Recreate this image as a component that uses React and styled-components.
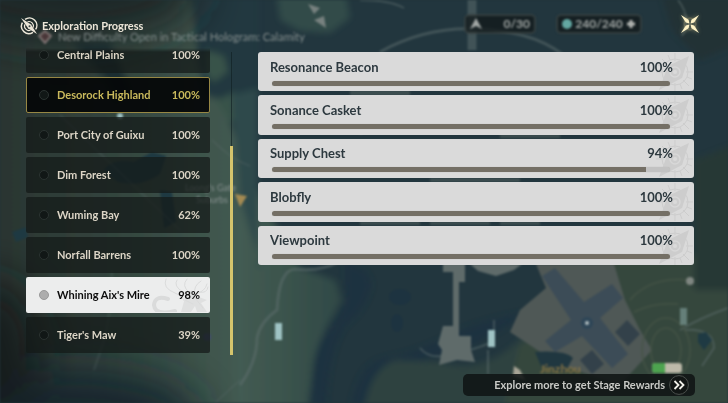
import React, { useLayoutEffect, useRef, useState } from 'react'
import styled, { createGlobalStyle } from 'styled-components'

const regions = [
    { name: "Central Plains", value: 100 },
    { name: "Desorock Highland", value: 100, current: true },
    { name: "Port City of Guixu", value: 100 },
    { name: "Dim Forest", value: 100 },
    { name: "Wuming Bay", value: 62 },
    { name: "Norfall Barrens", value: 100 },
    { name: "Whining Aix's Mire", value: 98 },
    { name: "Tiger's Maw", value: 39 },
];

const goals = [
    { name: "Resonance Beacon", value: 100 },
    { name: "Sonance Casket", value: 100 },
    { name: "Supply Chest", value: 94 },
    { name: "Blobfly", value: 100 },
    { name: "Viewpoint", value: 100 },
];

const GlobalStyle = createGlobalStyle`
* {
box-sizing: border-box;
}
body {
margin: 0;
background: #22343a;
font-family: Lato, "Noto Sans", sans-serif;
}
button {
font: inherit;
border: none;
cursor: pointer;
}
`;

const Page = styled.div`
position: relative;
height: 100vh;
min-height: 400px;
display: flex;
flex-direction: column;
overflow: hidden;
isolation: isolate;
`;

const Backdrop = styled.div`
position: absolute;
inset: 0;
z-index: -1;
`;
const MapSvg = styled.svg`
display: block;
width: 100%;
height: 100%;
filter: blur(1px);
`;
const Hud = styled.div`
position: absolute;
top: 14px;
left: 38px;
right: 86px;
display: flex;
align-items: flex-start;
gap: 20px;
color: #a3a8a6;
font-size: 12px;
font-weight: 700;
line-height: 20px;
filter: blur(1px);
`;
const Notice = styled.div`
flex: 1;
display: flex;
align-items: center;
gap: 6px;
padding-top: 16px;
font-size: 11px;
font-weight: 400;
line-height: 14px;
color: #858e8d;
white-space: nowrap;
`;
const Counter = styled.div`
display: flex;
align-items: center;
justify-content: space-between;
width: ${(props) => props.$wide ? "86px" : "72px"};
height: 20px;
padding: 0 4px;
border: 2px solid rgba(110, 120, 118, 0.35);
border-radius: 5px;
background: rgba(17, 24, 26, 0.75);
`;

const Header = styled.header`
display: flex;
align-items: flex-start;
justify-content: space-between;
height: 48px;
padding: 14px 28px 0 20px;
`;
const Title = styled.h1`
display: flex;
align-items: center;
gap: 4px;
margin: 3px 0 0;
color: #ece6d8;
font-size: 11px;
font-weight: 700;
line-height: 14px;
`;
const CloseButton = styled.button`
display: flex;
padding: 0;
background: none;
filter: drop-shadow(0 0 2px rgba(255, 236, 170, 0.5));
`;

const Main = styled.main`
flex: 1;
min-height: 0;
display: grid;
grid-template-columns: minmax(0, 184fr) 48px minmax(0, 436fr);
grid-template-rows: minmax(0, 1fr);
padding: 0 34px 0 26px;
`;

const RegionList = styled.nav`
display: flex;
flex-direction: column;
gap: 4px;
padding-bottom: 2px;
overflow-y: auto;
scrollbar-width: none;
mask-image: linear-gradient(transparent, #000 4px);
`;
const Region = styled.button`
position: relative;
flex: none;
display: flex;
align-items: center;
gap: 8px;
height: 36px;
padding: 0 9px 0 12px;
border: 1px solid ${(props) => props.$current ? "#978744" : "transparent"};
border-radius: 2px;
background: ${(props) => props.$active ? "#eceded" : props.$current ? "rgba(4, 7, 8, 0.92)" : "rgba(20, 25, 24, 0.72)"};
color: ${(props) => props.$active ? "#0c0c0c" : props.$current ? "#c9b95c" : "#dcd5c6"};
font-size: 11px;
font-weight: 700;
line-height: 16px;
text-align: left;
overflow: hidden;
`;
const Dot = styled.span`
width: 10px;
height: 10px;
border: 1px solid ${(props) => props.$active ? "#999" : "#2b3331"};
border-radius: 50%;
background: ${(props) => props.$active ? "#adadad" : "#111716"};
`;
const RegionName = styled.span`
flex: 1;
white-space: nowrap;
z-index: 1;
`;
const RegionValue = styled.span`
z-index: 1;
`;
const Beast = styled.svg`
position: absolute;
right: 0;
top: 0;
width: 58px;
height: 36px;
`;

const ScrollTrack = styled.div`
display: flex;
flex-direction: column;
justify-content: flex-end;
width: 3px;
margin: 4px 0 0 20px;
background: linear-gradient(90deg, transparent 1px, rgba(15, 30, 32, 0.6) 1px, rgba(15, 30, 32, 0.6) 2px, transparent 2px);
`;
const ScrollThumb = styled.div`
height: 69%;
background: #d5c46c;
`;

const GoalList = styled.ul`
display: grid;
grid-auto-rows: 1fr;
align-self: start;
gap: 4px;
min-height: 213px;
margin: 4px 0 0;
padding: 0;
list-style: none;
`;
const Goal = styled.li`
position: relative;
display: flex;
flex-direction: column;
justify-content: center;
gap: 4px;
padding: 0 21px 1px 12px;
border-radius: 3px;
background: #dadada;
color: #2d393f;
font-size: 13px;
font-weight: 700;
line-height: 20px;
overflow: hidden;
`;
const GoalHead = styled.div`
display: flex;
justify-content: space-between;
z-index: 1;
`;
const Bar = styled.div`
height: 5px;
margin: 0 3px 0 2px;
border-radius: 3px;
background: #c2c2c2;
box-shadow: 0 0 1px #b0b0ac;
overflow: hidden;
z-index: 1;
`;
const BarFill = styled.div`
height: 100%;
background: #746f65;
`;
const Compass = styled.svg`
position: absolute;
right: 0;
top: 0;
width: 40px;
height: 40px;
`;

const Footer = styled.footer`
display: flex;
justify-content: flex-end;
align-items: flex-end;
height: 48px;
padding: 0 33px 7px;
`;
const RewardsButton = styled.button`
display: flex;
align-items: center;
justify-content: flex-end;
gap: 4px;
width: 232px;
height: 22px;
padding: 0 6px;
border-radius: 5px;
background: rgba(16, 21, 20, 0.88);
color: #c9cac6;
font-size: 11px;
font-weight: 700;
line-height: 20px;
white-space: nowrap;
`;

const WorldMap = () => (
    <MapSvg viewBox="0 0 728 403" preserveAspectRatio="xMidYMid slice">
        <defs>
            <linearGradient id="land" x1="0" y1="0" x2="1" y2="0">
                <stop offset="0" stopColor="#29322f" />
                <stop offset="0.4" stopColor="#34463f" />
                <stop offset="0.72" stopColor="#435b52" />
                <stop offset="1" stopColor="#304946" />
            </linearGradient>
            <filter id="soft" x="-10%" y="-10%" width="120%" height="120%">
                <feGaussianBlur stdDeviation="3" />
            </filter>
            <filter id="haze" filterUnits="userSpaceOnUse" x="-150" y="-150" width="700" height="700">
                <feGaussianBlur stdDeviation="22" />
            </filter>
        </defs>
        <rect width="728" height="403" fill="#22363e" />
        {/* land and coasts */}
        <g filter="url(#soft)">
            <path d="M-20 -20H190L206 30L220 70L232 110L246 150L262 200L300 268L335 280L342 300L325 330L314 360L306 423H-20Z" fill="url(#land)" />
            <path d="M190 -10H258V150L236 140L222 100L206 96L198 60Z" fill="#22383f" />
            <path d="M206 50l18 6 4 16-14 10-8-8zM216 100l20-8 12 20-18 10z" fill="#385349" />
            <path d="M72 42l36 40 8 20 16-10-22-50z" fill="#1d2d30" />
            <path d="M345 262q28 6 26 26q-6 22-24 36q-20 24-22 99h-14q-2-70 14-90q24-26 20-50z" fill="#1d3340" />
            <path d="M600 268L540 310Q500 315 460 330Q420 352 384 358Q352 366 350 423H364Q370 372 402 366Q470 350 500 330Z" fill="#1d3340" />
            <path d="M362 423Q368 368 396 360L440 362Q480 376 520 340L560 320V423Z" fill="#2e4340" />
            <path d="M520 345L560 320L600 255H748V423H500Z" fill="#34463e" />
            <path d="M276 -10H345L350 18L330 33L300 31L280 20Z" fill="#324b49" />
            <path d="M232 95L258 88V268H262L240 200Z" fill="#2f4a4b" />
            <path d="M660 -10H748V40L700 60L672 30Z" fill="#243336" />
            <path d="M694 160L748 140V290H694Z" fill="#273936" />
        </g>
        <path d="M104 170q8-12 30-8l18-10 14 4-6 18q-20 14-42 8zM12 232l14-5 2 10-12 5zM160 190l12 2 4 30-12 6z" fill="#1e3942" />
        <path d="M308 4l12 4-6 6zM314 20l10-4 2 12z" fill="#77817f" />
        {/* vignette on the left side */}
        <g filter="url(#haze)">
            <ellipse cx="70" cy="-10" rx="130" ry="50" fill="#1f2728" />
            <ellipse cx="70" cy="420" rx="130" ry="50" fill="#17252d" />
            <ellipse cx="-10" cy="350" rx="50" ry="70" fill="#171c1e" />
        </g>
        <ellipse cx="400" cy="297" rx="11" ry="8" fill="#1d3340" />
        <ellipse cx="397" cy="323" rx="6" ry="9" fill="#1d3340" />
        {/* roads */}
        <g fill="none" stroke="#617070" strokeWidth="2" opacity="0.5">
            <path d="M380 52Q425 27 475 29Q530 30 562 54" strokeWidth="3" />
            <path d="M360 0Q390 0 404 8" />
            <path d="M472 0V50" strokeWidth="9" />
            <path d="M240 385Q257 362 257 338Q260 322 277 310Q279 270 295 269Q320 272 338 262" strokeWidth="3" />
            <path d="M420 348q8 10 22 8M470 350q20-6 24-10v-20M488 350v24" />
            <path d="M112 270q-2 50-8 70l-10 30M240 380l-24 22" opacity="0.5" />
            <path d="M680 330q20-12 48-22M684 330q30-2 30 18l-12 18" />
            <path d="M678 0q14 18 4 36M360 134q12-12 40-8M340 264q8-10 18-2" />
            <path d="M60 115L180 230M212 140Q232 160 250 166" opacity="0.5" />
        </g>
        <path d="M350 90h60v6h-60zM500 134h60v4h-60zM430 178h90v4h-90zM360 221h60v4h-60zM430 221h60v4h-60zM500 221h40v4h-40z" fill="#56645f" opacity="0.5" />
        {/* tower */}
        <path d="M443 262h22v20h-6v54h12v14l4 12-18-2-18 5 3-15-4-6 5-18h10v-54h-10z" fill="#5f6b6a" />
        <path d="M470 264h52l-8 6-18 6-18-5z" fill="#5f6b6a" />
        {/* city */}
        <path d="M536 264H614L625 300L640 330L652 350L620 385L560 365L510 332L520 310L546 288Z" fill="#4f5856" />
        <path d="M535 352q30-2 38 6l-8 14-24-6z" fill="#203740" />
        <path d="M542 276L555 268L584 302L612 284L623 298L600 318L628 354L612 368L582 336L555 352L545 341L571 320Z" fill="#3c4c57" />
        <path d="M615 332l12-12 13 14-12 12zM580 360l12-10 12 14-12 10z" fill="#33414a" />
        <circle cx="587" cy="323" r="6" fill="#2e4657" />
        <circle cx="587" cy="323" r="2" fill="#b2bfc2" />
        <g fill="none" stroke="#465447" strokeWidth="2" opacity="0.7">
            <ellipse cx="666" cy="350" rx="24" ry="32" />
            <ellipse cx="666" cy="350" rx="15" ry="22" />
            <path d="M630 300q20-24 60-20M634 312q20-10 44-8" />
        </g>
        <path d="M698 334l8-2 6 8-8 10-6-8z" fill="#1f3a43" />
        {/* markers */}
        <g fill="#9fc3c4">
            <rect x="275" y="323" width="7" height="17" />
            <rect x="488" y="330" width="7" height="17" />
            <rect x="680" y="308" width="7" height="17" opacity="0.45" />
            <circle cx="120" cy="116" r="3" />
            <circle cx="690" cy="281" r="4" fill="#7f8681" />
            <circle cx="207" cy="337" r="4" fill="#414c6c" />
        </g>
        <path d="M235 194l12 2-7 11z" fill="#a38a52" />
        <path d="M514 366l6 4 5 10-12-4z" fill="#a8a596" />
        <rect x="652" y="363" width="30" height="10" rx="3" fill="#bdb9a9" />
        <path d="M655 363h10v10h-10q-3 0-3-3v-4q0-3 3-3z" fill="#4da34f" />
        <g fontSize="9" fill="#87918f" textAnchor="end">
            <text x="236" y="191">Loong's Gate</text>
            <text x="228" y="203">Suburbs</text>
        </g>
        <text x="540" y="373" fontSize="12" fontWeight="700" fill="#897545">Jinzhou</text>
    </MapSvg>
)

const TitleIcon = () => (
    <svg width="18" height="18" viewBox="0 0 18 18" fill="none" stroke="#ece6d8" aria-hidden="true">
        <path d="M5 2.4A7.4 7.4 0 0 1 15.6 12.4M13 15.3A7.4 7.4 0 0 1 2.4 5.6" strokeWidth="1.5" />
        <path d="M7.5 4.8A4.5 4.5 0 0 1 13.2 10.6M10.6 13.2A4.5 4.5 0 0 1 4.8 7.4" strokeWidth="1.2" />
        <path d="M1 1L8.2 11.4L17 17L11 7.4Z" fill="#ece6d8" stroke="none" />
        <circle cx="9.5" cy="9.3" r="1" fill="#3b4442" stroke="none" />
    </svg>
)

const CloseIcon = () => (
    <svg width="20" height="20" viewBox="0 0 20 20" fill="#fff3c6" aria-hidden="true">
        <circle cx="10" cy="10" r="6" fill="none" stroke="#a99f72" strokeWidth="0.7" opacity="0.6" />
        <path d="M1 1L8.6 5.8L9.4 9.4L5.8 8.6Z" />
        <path d="M19 1L11.4 5.8L10.6 9.4L14.2 8.6Z" />
        <path d="M1 19L8.6 14.2L9.4 10.6L5.8 11.4Z" />
        <path d="M19 19L11.4 14.2L10.6 10.6L14.2 11.4Z" />
    </svg>
)

const CompassMark = () => (
    <Compass viewBox="0 0 40 40" fill="none" stroke="#cdcdcd" aria-hidden="true">
        <circle cx="21" cy="20" r="13" />
        <path d="M21 1v8M21 31v8M2 20h8M32 20h7M8 7l5 5M29 28l6 6M14 3l2 5M4 13l5 2M33 25l5 2M26 32l2 5" />
        <path d="M35 4L28 26L5 38L14 14Z" fill="#cdcdcd" stroke="none" />
        <circle cx="21" cy="20" r="5" stroke="#d8d8d8" strokeWidth="1.5" />
        <circle cx="21" cy="20" r="2" fill="#dadada" stroke="none" />
    </Compass>
)

const BeastMark = () => (
    <Beast viewBox="0 0 58 36" fill="none" stroke="#dadbdb" strokeLinecap="round" aria-hidden="true">
        <path d="M24 33Q4 38 3 27Q4 17 17 21" strokeWidth="4" />
        <path d="M15 1Q11 10 24 15Q34 19 35 28M26 2Q22 8 32 14Q40 20 38 34M36 1Q30 8 38 14M50 3Q42 8 44 16Q54 14 56 6" />
        <path d="M30 34L34 20L40 12L48 19L56 22L50 25L56 34H46L44 28L40 34Z" fill="#dfe0e0" stroke="none" />
        <path d="M34 22l8 4M44 20l8 10M48 14q8 2 9-5" />
    </Beast>
)

const App = () => {
    const [selected, setSelected] = useState("Whining Aix's Mire");
    const listRef = useRef(null);

    useLayoutEffect(() => {
      listRef.current.scrollTop = listRef.current.scrollHeight;
    }, []);

  return (
    <Page>
        <GlobalStyle />
        <Backdrop aria-hidden="true">
            <WorldMap />
            <Hud>
                <Notice>
                    <svg width="14" height="14" viewBox="0 0 14 14">
                        <path d="M7 1L13 6L7 13L1 6Z" fill="#493638" stroke="#7d7372" strokeWidth="2" />
                    </svg>
                    New Difficulty Open in Tactical Hologram: Calamity
                </Notice>
                <Counter>
                    <svg width="12" height="12" viewBox="0 0 12 12">
                        <path d="M6 0L12 11L6 8L0 11Z" fill="#a3a8a6" />
                    </svg>
                    0/30
                </Counter>
                <Counter $wide>
                    <svg width="10" height="10" viewBox="0 0 10 10">
                        <circle cx="5" cy="5" r="5" fill="#63a8a2" />
                    </svg>
                    240/240
                    <svg width="10" height="10" viewBox="0 0 10 10">
                        <path d="M5 1V9M1 5H9" stroke="#b5b8b4" strokeWidth="3" />
                    </svg>
                </Counter>
            </Hud>
        </Backdrop>
        <Header>
            <Title>
                <TitleIcon />
                Exploration Progress
            </Title>
            <CloseButton aria-label="Close">
                <CloseIcon />
            </CloseButton>
        </Header>
        <Main>
            <RegionList ref={listRef}>
                {regions.map((item) => (
                    <Region
                        key={item.name}
                        $active={item.name === selected}
                        $current={item.current}
                        onClick={() => setSelected(item.name)}
                    >
                        {item.name === selected && <BeastMark />}
                        <Dot $active={item.name === selected} />
                        <RegionName>{item.name}</RegionName>
                        <RegionValue>{item.value}%</RegionValue>
                    </Region>
                ))}
            </RegionList>
            <ScrollTrack>
                <ScrollThumb />
            </ScrollTrack>
            <GoalList>
                {goals.map((item) => (
                    <Goal key={item.name}>
                        <CompassMark />
                        <GoalHead>
                            <span>{item.name}</span>
                            <span>{item.value}%</span>
                        </GoalHead>
                        <Bar role="progressbar" aria-label={item.name} aria-valuenow={item.value}>
                            <BarFill style={{ width: `${item.value}%` }} />
                        </Bar>
                    </Goal>
                ))}
            </GoalList>
        </Main>
        <Footer>
            <RewardsButton>
                Explore more to get Stage Rewards
                <svg width="20" height="20" viewBox="0 0 20 20" fill="none" aria-hidden="true">
                    <circle cx="10" cy="10" r="9.4" fill="#111514" stroke="#4b504d" />
                    <path d="M5.5 6L9.5 10L5.5 14M10.5 6L14.5 10L10.5 14" stroke="#f0efe8" strokeWidth="1.8" />
                </svg>
            </RewardsButton>
        </Footer>
    </Page>
  )
}

export default App
